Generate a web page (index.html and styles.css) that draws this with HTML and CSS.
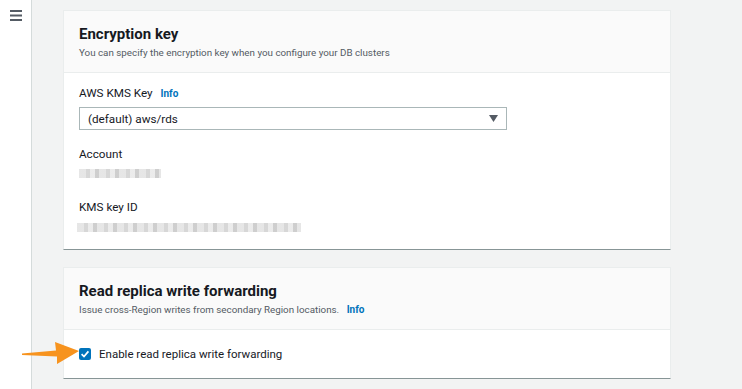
FILE: index.html
```html
<!DOCTYPE html>
<html lang="en">
<head>
    <meta charset="UTF-8">
    <meta name="viewport" content="width=device-width, initial-scale=1.0">
    <title>Encryption settings</title>
    <link rel="stylesheet" href="styles.css">
</head>
<body>
    <div class="layout">
        <!-- Collapsed navigation -->
        <aside class="sidebar">
            <svg class="menu-icon" width="12" height="11" viewBox="0 0 12 11">
                <rect x="0" y="0" width="12" height="2" fill="#545b64"/>
                <rect x="0" y="4.5" width="12" height="2" fill="#545b64"/>
                <rect x="0" y="9" width="12" height="2" fill="#545b64"/>
            </svg>
        </aside>

        <main class="main">
            <div class="card">
                <div class="card-header">
                    <h2>Encryption key</h2>
                    <p class="desc">You can specify the encryption key when you configure your DB clusters</p>
                </div>
                <div class="card-body">
                    <div class="label first">AWS KMS Key <a href="#" class="info">Info</a></div>
                    <div class="select">
                        <span>(default) aws/rds</span>
                        <svg class="caret" width="9" height="7" viewBox="0 0 9 7">
                            <polygon points="0,0 9,0 4.5,7" fill="#545b64"/>
                        </svg>
                    </div>
                    <div class="label">Account</div>
                    <div class="blurred short"></div>
                    <div class="label">KMS key ID</div>
                    <div class="blurred long"></div>
                </div>
            </div>

            <div class="card">
                <div class="card-header">
                    <h2>Read replica write forwarding</h2>
                    <p class="desc">Issue cross-Region writes from secondary Region locations. <a href="#" class="info">Info</a></p>
                </div>
                <div class="card-body check-row">
                    <span class="checkbox">
                        <svg width="12" height="12" viewBox="0 0 12 12">
                            <polyline points="2.6,6.2 5,8.5 9.4,3.4" fill="none" stroke="#fff" stroke-width="1.7"/>
                        </svg>
                    </span>
                    <span class="check-label">Enable read replica write forwarding</span>
                </div>
            </div>
        </main>
    </div>

    <!-- Annotation arrow -->
    <svg class="arrow" width="60" height="26" viewBox="0 0 60 26">
        <polygon points="0,13.5 34,10.5 33,2 57,11 35,24 35,16.5 0,15" fill="#f7931e"/>
    </svg>
</body>
</html>
```

FILE: styles.css
```css
body {
    margin: 0;
    padding: 0;
    background: #f2f3f3;
    font-family: 'Roboto', 'Liberation Sans', sans-serif;
    color: #16191f;
}

.layout {
    display: flex;
    min-height: 389px;
}

.sidebar {
    width: 31px;
    flex: none;
    background: #fff;
    border-right: 1px solid #d5dbdb;
}

.menu-icon {
    display: block;
    margin: 10px 0 0 10px;
}

.main {
    flex: 1;
    padding: 10px 71px 0 31px;
}

.card {
    background: #fff;
    border: 1px solid #eaeded;
    border-bottom: 1px solid #879596;
    margin-bottom: 17px;
}

.card-header {
    background: #fafafa;
    border-bottom: 1px solid #eaeded;
    padding: 13px 15px 11px;
}

.card-header h2 {
    margin: 0;
    font-size: 15px;
    line-height: 20px;
    font-weight: bold;
}

.desc {
    margin: 0;
    font-size: 9.8px;
    line-height: 17px;
    color: #545b64;
}

.info {
    color: #0073bb;
    font-weight: bold;
    font-size: 10px;
    text-decoration: none;
    margin-left: 5px;
}

.card-body {
    padding: 10px 15px 17px;
}

.label {
    font-size: 11.7px;
    line-height: 20px;
    margin-top: 14px;
}

.label.first {
    margin-top: 0;
}

.label + .blurred {
    margin-top: 5px;
}

.blurred + .label {
    margin-top: 19px;
}

.select {
    display: flex;
    align-items: center;
    justify-content: space-between;
    width: 410px;
    height: 21px;
    margin-top: 3px;
    padding: 0 8px;
    border: 1px solid #aab7b8;
    font-size: 11.7px;
}

.blurred {
    height: 9px;
    background: repeating-linear-gradient(90deg, #e2e2e2 0 7px, #d0d0d0 7px 11px, #e8e8e8 11px 16px, #c6c6c6 16px 20px);
    opacity: 0.85;
}

.blurred.short {
    width: 82px;
}

.blurred.long {
    width: 224px;
    margin-left: -2px;
}

.label + .blurred.long {
    margin-top: 6px;
}

.check-row {
    display: flex;
    align-items: center;
    padding: 17px 15px 17px;
}

.checkbox {
    width: 12px;
    height: 12px;
    background: #0073bb;
    border-radius: 2px;
    display: flex;
}

.check-label {
    font-size: 11.5px;
    margin-left: 8px;
}

.arrow {
    position: absolute;
    left: 22px;
    top: 340px;
}
```
